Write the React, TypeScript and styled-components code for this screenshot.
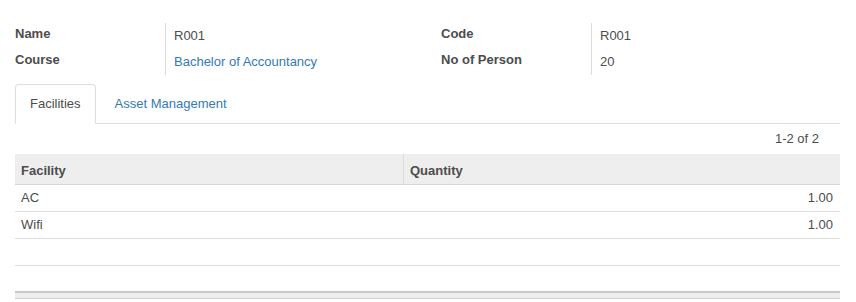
import React from "react";
import styled, { createGlobalStyle } from "styled-components";

const Global = createGlobalStyle`
  *, *::before, *::after { box-sizing: border-box; }
  html, body { margin: 0; padding: 0; background: #fff; }
  body {
    font-family: "Liberation Sans", Arial, sans-serif;
    font-size: 13px;
    line-height: 18px;
    color: #4c4c4c;
  }
`;

const Sheet = styled.div`
  padding: 23px 16px 0 15px;
  width: 856px;
`;

const Groups = styled.div`
  display: grid;
  grid-template-columns: 426px 1fr;
`;

const Group = styled.div`
  display: grid;
  grid-template-columns: 150px 1fr;
  grid-auto-rows: 26px;
`;

const Label = styled.div`
  font-weight: bold;
  padding-top: 2px;
  color: #4c4c4c;
`;

const Value = styled.div<{ $link?: boolean }>`
  border-left: 1px solid #dcdcdc;
  padding: 4px 8px 0;
  color: ${(p) => (p.$link ? "#337ab7" : "#4c4c4c")};
`;

const Tabs = styled.div`
  margin-top: 9px;
  display: flex;
  gap: 4px;
  border-bottom: 1px solid #ddd;
`;

const Tab = styled.div<{ $active?: boolean }>`
  padding: 10px 14px;
  border: 1px solid ${(p) => (p.$active ? "#ddd" : "transparent")};
  border-bottom-color: transparent;
  border-radius: 4px 4px 0 0;
  margin-bottom: -1px;
  background: ${(p) => (p.$active ? "#fff" : "transparent")};
  color: ${(p) => (p.$active ? "#4c4c4c" : "#337ab7")};
`;

const Pager = styled.div`
  height: 30px;
  display: flex;
  align-items: center;
  justify-content: flex-end;
  padding-right: 21px;
`;

const Table = styled.div`
  display: grid;
  grid-template-columns: 388px 1fr;
`;

const Head = styled.div<{ $divider?: boolean }>`
  background: #eee;
  height: 31px;
  border-bottom: 1px solid #d6d6d6;
  font-weight: bold;
  display: flex;
  align-items: center;
  padding: 4px 6px 0;
  border-left: ${(p) => (p.$divider ? "1px solid #dcdcdc" : "none")};
`;

const Cell = styled.div<{ $right?: boolean; $last?: boolean }>`
  height: ${(p) => (p.$last ? "25px" : "27px")};
  border-bottom: ${(p) => (p.$last ? "none" : "1px solid #ddd")};
  display: flex;
  align-items: center;
  justify-content: ${(p) => (p.$right ? "flex-end" : "flex-start")};
  padding: 0 7px 0 6px;
`;

const Foot = styled.div`
  grid-column: 1 / -1;
  height: 8px;
  background: #eee;
  border-top: 2px solid #c9c9c9;
  border-bottom: 1px solid #cfcfcf;
`;

const rows = [
  { name: "AC", qty: "1.00" },
  { name: "Wifi", qty: "1.00" },
  { name: "", qty: "" },
  { name: "", qty: "" },
];

export default function App() {
  return (
    <>
      <Global />
      <Sheet>
        <Groups>
          <Group>
            <Label>Name</Label>
            <Value>R001</Value>
            <Label>Course</Label>
            <Value $link>Bachelor of Accountancy</Value>
          </Group>
          <Group>
            <Label>Code</Label>
            <Value>R001</Value>
            <Label>No of Person</Label>
            <Value>20</Value>
          </Group>
        </Groups>
        <Tabs>
          <Tab $active>Facilities</Tab>
          <Tab>Asset Management</Tab>
        </Tabs>
        <Pager>1-2 of 2</Pager>
        <Table>
          <Head>Facility</Head>
          <Head $divider>Quantity</Head>
          {rows.map((r, i) => (
            <React.Fragment key={i}>
              <Cell $last={i === rows.length - 1}>{r.name}</Cell>
              <Cell $right $last={i === rows.length - 1}>{r.qty}</Cell>
            </React.Fragment>
          ))}
          <Foot />
        </Table>
      </Sheet>
    </>
  );
}
